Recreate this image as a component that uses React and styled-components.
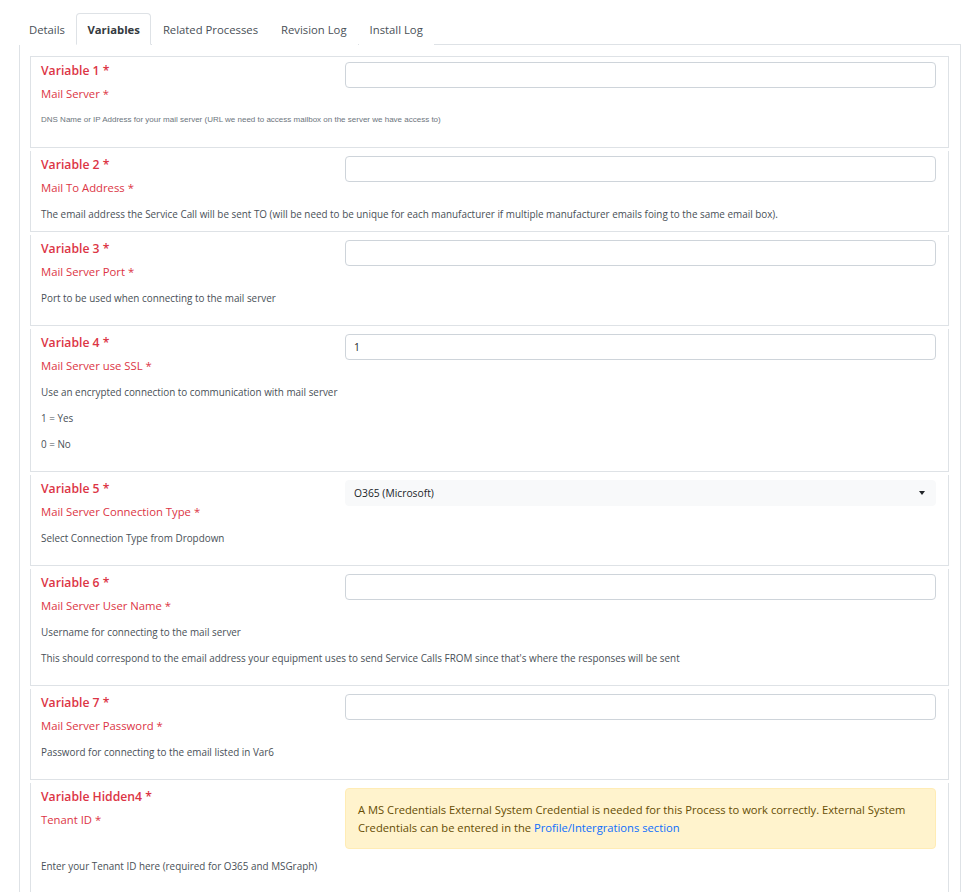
import React from "react";
import styled, { createGlobalStyle } from "styled-components";

const GlobalStyle = createGlobalStyle`
  body {
    margin: 0;
    background: #fff;
    font-family: "Open Sans", "Noto Sans", sans-serif;
    color: #212529;
  }
`;

const Page = styled.main`
  padding: 13px 5px 0 19px;
`;

const TabBar = styled.nav`
  display: flex;
  border-bottom: 1px solid #dee2e6;
`;

const Tab = styled.div`
  height: 30px;
  display: flex;
  align-items: center;
  padding: 0 10.5px 0 ${(p) => (p.$first ? "9px" : "10px")};
  margin-right: ${(p) => (p.$first ? "0" : "0.5px")};
  margin-bottom: -1px;
  font-size: 11.3px;
  font-weight: ${(p) => (p.$active ? 700 : 400)};
  color: ${(p) => (p.$active ? "#343a40" : "#495057")};
  border: 1px solid ${(p) => (p.$active ? "#dee2e6" : "transparent")};
  border-bottom-color: ${(p) => (p.$active ? "#fff" : "transparent")};
  border-radius: 4px 4px 0 0;
  background: #fff;
`;

const Card = styled.section`
  border: 1px solid #dee2e6;
  border-top: none;
  border-radius: 0 0 4px 4px;
  padding: 11px 11px 0 10px;
  display: flex;
  flex-direction: column;
  gap: 3px;
`;

const Row = styled.div`
  border: 1px solid #dee2e6;
  border-top: ${(p) => (p.$first ? "1px solid #dee2e6" : "none")};
  padding: 5px 12px 9px 10px;
`;

const Top = styled.div`
  display: grid;
  grid-template-columns: 294px 1fr;
  column-gap: 10px;
  align-items: start;
  margin-bottom: 9px;
`;

const Heading = styled.div`
  font-size: 12.2px;
  font-weight: 600;
  line-height: 18px;
  color: #dc3545;
`;

const Label = styled.div`
  margin-top: 5px;
  font-size: 11.3px;
  line-height: 18px;
  color: #dc3545;
`;

const Input = styled.div`
  height: 24px;
  border: 1px solid #ced4da;
  border-radius: 4px;
  padding: 0 8px;
  display: flex;
  align-items: center;
  font-size: 10.3px;
  color: #212529;
`;

const Select = styled(Input)`
  border-color: #f8f9fa;
  background: #f8f9fa;
  justify-content: space-between;
`;

const Caret = styled.span`
  width: 0;
  height: 0;
  margin-right: 2px;
  border-left: 3px solid transparent;
  border-right: 3px solid transparent;
  border-top: 4px solid #212529;
`;

const Desc = styled.p`
  margin: ${(p) => (p.$tight ? "4px 0 0" : "0 0 10px")};
  font-size: 9.9px;
  line-height: 16px;
  color: #495057;
`;

const SmallDesc = styled.p`
  margin: 0 0 10px;
  font-family: "Liberation Sans", Arial, sans-serif;
  font-size: 8px;
  line-height: 16px;
  color: #6c757d;
`;

const Alert = styled.div`
  background: #fff3cd;
  border: 1px solid #ffecb5;
  border-radius: 4px;
  padding: 12px 12px 11px;
  font-size: 11.2px;
  line-height: 18px;
  color: #664d03;
`;

const Link = styled.a`
  color: #0d6efd;
  text-decoration: none;
`;

const tabs = ["Details", "Variables", "Related Processes", "Revision Log", "Install Log"];

const variables = [
  {
    title: "Variable 1 *",
    label: "Mail Server *",
    small: "DNS Name or IP Address for your mail server (URL we need to access mailbox on the server we have access to)",
  },
  {
    title: "Variable 2 *",
    label: "Mail To Address *",
    tight: true,
    desc: [
      "The email address the Service Call will be sent TO (will be need to be unique for each manufacturer if multiple manufacturer emails foing to the same email box).",
    ],
  },
  {
    title: "Variable 3 *",
    label: "Mail Server Port *",
    desc: ["Port to be used when connecting to the mail server"],
  },
  {
    title: "Variable 4 *",
    label: "Mail Server use SSL *",
    value: "1",
    desc: ["Use an encrypted connection to communication with mail server", "1 = Yes", "0 = No"],
  },
  {
    title: "Variable 5 *",
    label: "Mail Server Connection Type *",
    select: "O365 (Microsoft)",
    desc: ["Select Connection Type from Dropdown"],
  },
  {
    title: "Variable 6 *",
    label: "Mail Server User Name *",
    desc: [
      "Username for connecting to the mail server",
      "This should correspond to the email address your equipment uses to send Service Calls FROM since that's where the responses will be sent",
    ],
  },
  {
    title: "Variable 7 *",
    label: "Mail Server Password *",
    desc: ["Password for connecting to the email listed in Var6"],
  },
  {
    title: "Variable Hidden4 *",
    label: "Tenant ID *",
    alert: true,
    desc: ["Enter your Tenant ID here (required for O365 and MSGraph)"],
  },
];

function Field({ v }) {
  if (v.alert) {
    return (
      <Alert>
        A MS Credentials External System Credential is needed for this Process to work correctly. External System
        Credentials can be entered in the <Link href="#">Profile/Intergrations section</Link>
      </Alert>
    );
  }
  if (v.select) {
    return (
      <Select>
        {v.select}
        <Caret />
      </Select>
    );
  }
  return <Input>{v.value}</Input>;
}

export default function App() {
  return (
    <Page>
      <GlobalStyle />
      <TabBar>
        {tabs.map((t, i) => (
          <Tab key={t} $first={i === 0} $active={t === "Variables"}>
            {t}
          </Tab>
        ))}
      </TabBar>
      <Card>
        {variables.map((v, i) => (
          <Row key={v.title} $first={i === 0}>
            <Top>
              <div>
                <Heading>{v.title}</Heading>
                <Label>{v.label}</Label>
              </div>
              <Field v={v} />
            </Top>
            {v.small && <SmallDesc>{v.small}</SmallDesc>}
            {v.desc &&
              v.desc.map((d) => (
                <Desc key={d} $tight={v.tight}>
                  {d}
                </Desc>
              ))}
          </Row>
        ))}
      </Card>
    </Page>
  );
}
